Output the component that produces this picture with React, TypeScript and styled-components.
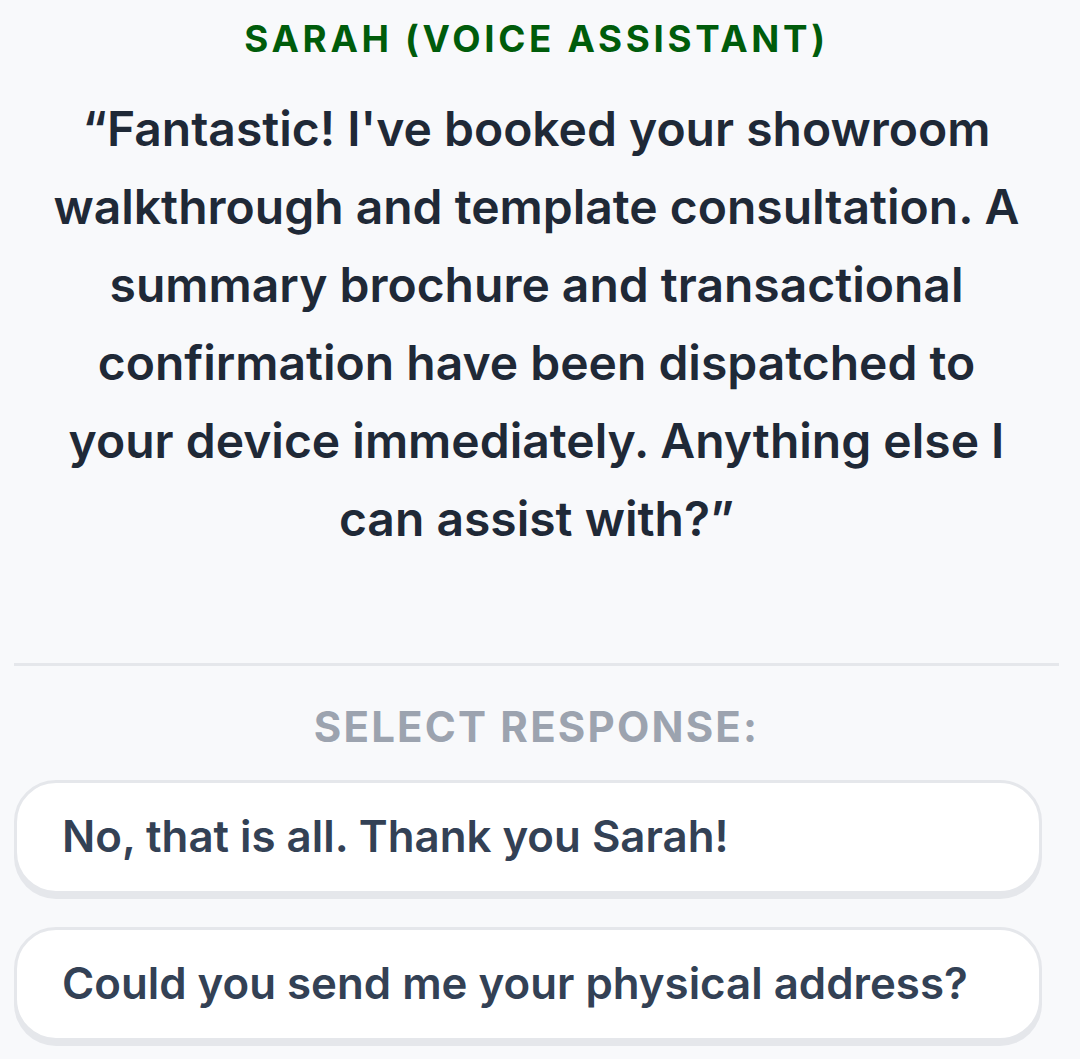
import React from "react";
import styled, { createGlobalStyle } from "styled-components";

const GlobalStyle = createGlobalStyle`
  html, body {
    margin: 0;
    padding: 0;
    background: #f8f9fb;
  }
  body {
    font-family: Inter, "Noto Sans", "Liberation Sans", sans-serif;
    -webkit-font-smoothing: antialiased;
  }
`;

const Page = styled.div`
  display: flex;
  flex-direction: column;
  align-items: stretch;
  padding: 11px 21px 0 14px;
  min-height: 1059px;
  box-sizing: border-box;
`;

const Speaker = styled.div`
  font-size: 36.75px;
  line-height: 55px;
  font-weight: 700;
  letter-spacing: 0.1em;
  color: #005c0b;
  text-align: center;
  text-transform: uppercase;
`;

const Quote = styled.p`
  margin: 24px 0 0;
  padding: 0 30px;
  font-size: 48px;
  line-height: 78px;
  font-weight: 600;
  color: #1f2937;
  text-align: center;
`;

const Divider = styled.hr`
  margin: 105px 0 0;
  border: none;
  height: 3px;
  background: #e5e7eb;
`;

const Prompt = styled.div`
  margin-top: 29px;
  font-size: 42px;
  line-height: 63px;
  font-weight: 700;
  letter-spacing: 0.052em;
  color: #9ca3af;
  text-align: center;
  text-transform: uppercase;
`;

const Options = styled.div`
  display: flex;
  flex-direction: column;
  gap: 33px;
  margin-top: 22px;
  margin-right: 17px;
`;

const Option = styled.button`
  display: block;
  width: 100%;
  box-sizing: border-box;
  text-align: left;
  padding: 22px 45px 23px;
  background: #ffffff;
  border: 3px solid #e5e7eb;
  border-radius: 42px;
  box-shadow: 0 5px 0 #e5e7eb;
  font-family: inherit;
  font-size: 43.8px;
  line-height: 63px;
  font-weight: 600;
  color: #334155;
  cursor: pointer;
`;

const options = [
  "No, that is all. Thank you Sarah!",
  "Could you send me your physical address?",
];

export default function App() {
  return (
    <>
      <GlobalStyle />
      <Page>
        <Speaker>Sarah (Voice Assistant)</Speaker>
        <Quote>
          “Fantastic! I've booked your showroom walkthrough and template
          consultation. A summary brochure and transactional confirmation have
          been dispatched to your device immediately. Anything else I can
          assist with?”
        </Quote>
        <Divider />
        <Prompt>Select Response:</Prompt>
        <Options>
          {options.map((o) => (
            <Option key={o}>{o}</Option>
          ))}
        </Options>
      </Page>
    </>
  );
}
